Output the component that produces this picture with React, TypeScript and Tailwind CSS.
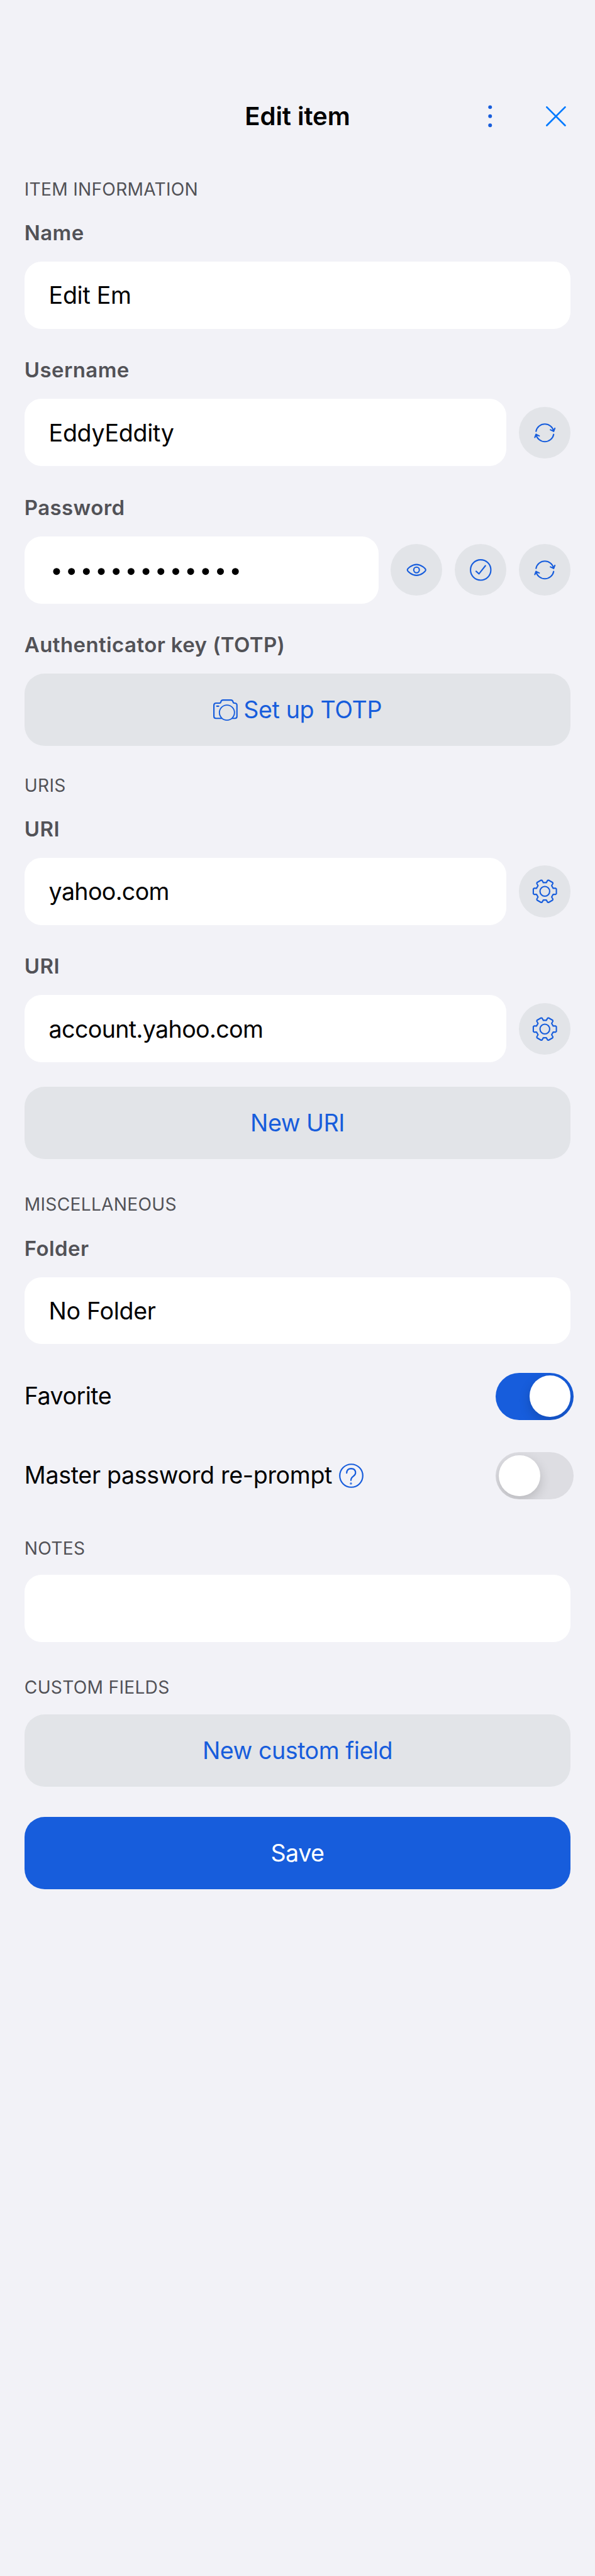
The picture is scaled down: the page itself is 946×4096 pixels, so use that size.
import type { ReactNode } from "react";

const toothPoints: [number, number][] = [
  [49, -18], [64, -18], [68, -14], [68, 14], [64, 18], [49, 18],
];

const gearPath =
  [0, 1, 2, 3, 4, 5]
    .map((i) => {
      const a = (i * Math.PI) / 3;
      return toothPoints
        .map(([x, y], j) => {
          const px = (153 + x * Math.cos(a) - y * Math.sin(a)).toFixed(1);
          const py = (153 + x * Math.sin(a) + y * Math.cos(a)).toFixed(1);
          return `${i === 0 && j === 0 ? "M" : "L"}${px} ${py}`;
        })
        .join(" ");
    })
    .join(" ") + "Z";

function CircleButton({ label, children }: { label: string; children: ReactNode }) {
  return (
    <button aria-label={label} className="size-[82.5px] shrink-0 rounded-full bg-[#e2e4e8]">
      <svg viewBox="0 0 306 306" className="size-full" fill="none" stroke="#175ddc" strokeWidth="7.8" strokeLinecap="round" strokeLinejoin="round">
        {children}
      </svg>
    </button>
  );
}

function RefreshButton() {
  return (
    <CircleButton label="Generate">
      <path d="M101 144A53 53 0 0 1 205 144M186 135L205 144L212 126" />
      <path d="M205 162A53 53 0 0 1 101 162M94 180L101 162L120 171" />
    </CircleButton>
  );
}

function GearButton() {
  return (
    <CircleButton label="Options">
      <path d={gearPath} />
      <circle cx="153" cy="153" r="28.5" />
    </CircleButton>
  );
}

function SectionHeader({ className, children }: { className: string; children: string }) {
  return <h2 className={`h-9 text-[28.2px] leading-9 tracking-[0.25px] text-[#525257] ${className}`}>{children}</h2>;
}

function FieldLabel({ children }: { children: string }) {
  return <div className="h-10 text-[33px] leading-10 font-semibold tracking-[0.4px] text-[#525257]">{children}</div>;
}

function Field({ label, value, tracking = "tracking-[-0.3px]", className, children }: { label: string; value: ReactNode; tracking?: string; className: string; children?: ReactNode }) {
  return (
    <div className={className}>
      <FieldLabel>{label}</FieldLabel>
      <div className="mt-[26px] flex items-center gap-[19.4px]">
        <div className={`flex h-[106.7px] flex-1 items-center rounded-[27px] bg-white pt-[2px] pl-[38.8px] text-[37.6px] text-black ${tracking}`}>{value}</div>
        {children}
      </div>
    </div>
  );
}

function WideButton({ className, children }: { className: string; children: ReactNode }) {
  return <button className={`flex h-[114.8px] w-full items-center justify-center rounded-[32px] pt-px text-[37.6px] tracking-[-0.45px] ${className}`}>{children}</button>;
}

function Toggle({ on }: { on: boolean }) {
  return (
    <div className={`-mr-[4.8px] flex h-[75.2px] w-[123.7px] items-center overflow-hidden rounded-full px-[4.8px] ${on ? "justify-end bg-[#175ddc]" : "justify-start bg-[#dddde2]"}`}>
      <div className="size-[65.5px] rounded-full bg-white shadow-[0_7px_18px_rgba(0,0,0,0.17)]" />
    </div>
  );
}

export default function App() {
  return (
    <div className="h-[4096px] w-[946px] overflow-hidden bg-[#f2f2f7] px-[38.8px] font-['Inter','Liberation_Sans',sans-serif]">
      <header className="grid grid-cols-[1fr_auto_1fr] items-center pt-[160px]">
        <h1 className="col-start-2 h-[50px] text-[40px] leading-[50px] font-semibold tracking-[-0.05px] text-black">Edit item</h1>
        <div className="flex items-center justify-end gap-[85.2px] pr-[7.3px]">
          <svg viewBox="0 0 24 132" className="h-[35.6px] w-[6.5px]" fill="#175ddc">
            <circle cx="12" cy="12.5" r="11" />
            <circle cx="12" cy="66" r="11" />
            <circle cx="12" cy="119.5" r="11" />
          </svg>
          <svg viewBox="0 0 118 118" className="size-[31.8px]" stroke="#007aff" strokeWidth="10" strokeLinecap="round">
            <path d="M5 5L113 113M113 5L5 113" />
          </svg>
        </div>
      </header>

      <SectionHeader className="mt-[72.6px]">ITEM INFORMATION</SectionHeader>
      <Field className="mt-[31.5px]" label="Name" value="Edit Em" />
      <Field className="mt-[45.7px]" label="Username" value="EddyEddity">
        <RefreshButton />
      </Field>
      <Field
        className="mt-[45.7px]"
        label="Password"
        value={
          <svg viewBox="0 0 380 20" className="h-[16.2px] w-[307px]" fill="#000">
            {Array.from({ length: 13 }, (_, i) => (
              <circle key={i} cx={14.8 + i * 29.32} cy="12" r="6.8" />
            ))}
          </svg>
        }
      >
        <CircleButton label="Show password">
          <path d="M99 153C99 146 125 121 153 121S207 146 207 153S181 185 153 185S99 160 99 153Z" />
          <circle cx="153" cy="153" r="16.5" />
        </CircleButton>
        <CircleButton label="Check password">
          <circle cx="153" cy="153" r="60" />
          <path d="M126 161L143 176L181 128" />
        </CircleButton>
        <RefreshButton />
      </Field>

      <div className="mt-[45.7px]">
        <FieldLabel>Authenticator key (TOTP)</FieldLabel>
      </div>
      <WideButton className="mt-[26px] gap-[9.5px] bg-[#e2e4e8] text-[#175ddc]">
        <svg viewBox="54 98 144 134" className="h-[36.1px] w-[38.8px]" fill="none" stroke="#175ddc" strokeWidth="8" strokeLinecap="round" strokeLinejoin="round">
          <path d="M103 214H70Q58 214 58 202V137Q58 124 71 124H90Q98 124 99 117Q101 106 112 106H158Q169 106 171 117Q172 124 180 124Q194 124 194 137V202Q194 214 182 214H167" />
          <circle cx="135" cy="180" r="44.5" strokeWidth="7" />
          <path d="M75 142H86" />
        </svg>
        <span className="tracking-[-0.35px]">Set up TOTP</span>
      </WideButton>

      <SectionHeader className="mt-[44.6px]">URIS</SectionHeader>
      <Field className="mt-[31.5px]" label="URI" value="yahoo.com" tracking="tracking-[-0.65px]">
        <GearButton />
      </Field>
      <Field className="mt-[45.7px]" label="URI" value="account.yahoo.com" tracking="tracking-[-0.62px]">
        <GearButton />
      </Field>
      <WideButton className="mt-[38.8px] bg-[#e2e4e8] text-[#175ddc]">New URI</WideButton>

      <SectionHeader className="mt-[54.3px]">MISCELLANEOUS</SectionHeader>
      <Field className="mt-[31.5px]" label="Folder" value="No Folder" />
      <div className="mt-[45.3px] flex items-center justify-between text-[37.6px] text-black">
        <span className="tracking-[-0.5px]">Favorite</span>
        <Toggle on />
      </div>
      <div className="mt-[51px] flex items-center justify-between text-[37.6px] text-black">
        <span className="flex items-center gap-[10.5px] tracking-[-0.32px]">
          Master password re-prompt
          <svg viewBox="0 0 144 144" className="size-[39px]" fill="none" stroke="#175ddc" strokeWidth="8" strokeLinecap="round" strokeLinejoin="round">
            <circle cx="72" cy="72" r="67.5" />
            <path d="M45 56Q46 30 71 30Q97 31 97 55Q97 65 84 75Q70 85 70 99" />
            <circle cx="70" cy="118" r="2" />
          </svg>
        </span>
        <Toggle on={false} />
      </div>

      <SectionHeader className="mt-[59.9px]">NOTES</SectionHeader>
      <div className="mt-[24.6px] h-[106.7px] rounded-[27px] bg-white" />

      <SectionHeader className="mt-[54.3px]">CUSTOM FIELDS</SectionHeader>
      <WideButton className="mt-[24.6px] bg-[#e2e4e8] text-[#175ddc]">New custom field</WideButton>
      <WideButton className="mt-[48.5px] bg-[#175ddc] text-white">Save</WideButton>
    </div>
  );
}
